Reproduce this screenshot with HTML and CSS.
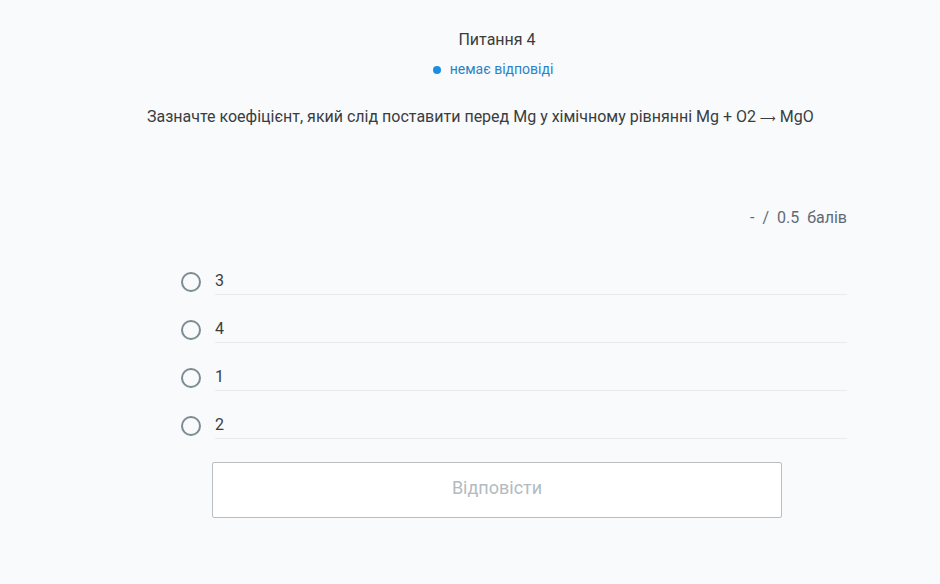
FILE: index.html
```html
<!DOCTYPE html>
<html lang="uk">
<head>
<meta charset="utf-8">
<title>Питання 4</title>
<link rel="stylesheet" href="styles.css">
</head>
<body>
<main class="quiz">
  <h1 class="q-title">Питання 4</h1>
  <div class="q-status"><span class="dot"></span><span>немає відповіді</span></div>
  <p class="q-text">Зазначте коефіцієнт, який слід поставити перед Mg у хімічному рівнянні Mg + O2 <span class="arrow">⟶</span> MgO</p>
  <div class="q-score">-&nbsp; /&nbsp; 0.5&nbsp; балів</div>
  <ul class="options">
    <li class="option"><span class="radio"></span><span class="label">3</span></li>
    <li class="option"><span class="radio"></span><span class="label">4</span></li>
    <li class="option"><span class="radio"></span><span class="label">1</span></li>
    <li class="option"><span class="radio"></span><span class="label">2</span></li>
  </ul>
  <div class="actions"><button class="submit" type="button">Відповісти</button></div>
</main>
</body>
</html>
```
FILE: styles.css
```css
html, body {
  margin: 0;
  padding: 0;
  background: #f9fafc;
  font-family: Roboto, "Noto Sans", sans-serif;
  color: #3a3d40;
}
.quiz {
  width: 700px;
  margin-left: 147px;
  padding-top: 28px;
  display: flex;
  flex-direction: column;
}
.q-title {
  margin: 0;
  font-size: 16px;
  font-weight: 400;
  line-height: 24px;
  text-align: center;
  color: #3a3d40;
}
.q-status {
  margin-top: 7px;
  height: 20px;
  display: flex;
  align-items: center;
  justify-content: center;
  gap: 9px;
  font-size: 14px;
  line-height: 20px;
  color: #2b83c6;
  padding-right: 8px;
}
.dot {
  width: 8px;
  height: 8px;
  border-radius: 50%;
  background: #1a8ee2;
  margin-top: 2px;
}
.q-text {
  margin: 26px 0 0;
  height: 24px;
  font-size: 16px;
  line-height: 24px;
}
.arrow {
  font-family: "DejaVu Sans", sans-serif;
  font-size: 11px;
  line-height: 1;
}
.q-score {
  margin-top: 77px;
  text-align: right;
  font-size: 16px;
  line-height: 24px;
  color: #5f6b74;
}
.options {
  list-style: none;
  margin: 17px 0 0;
  padding: 0 0 0 34px;
}
.option {
  display: flex;
  align-items: flex-end;
  height: 48px;
}
.radio {
  width: 16px;
  height: 16px;
  border: 2px solid #7d8b93;
  border-radius: 50%;
  margin-right: 14px;
  margin-bottom: 3px;
  flex: none;
}
.label {
  flex: 1;
  font-size: 16px;
  line-height: 24px;
  padding-bottom: 1px;
  border-bottom: 1px solid #e8ebee;
}
.actions {
  margin-top: 23px;
  padding-left: 65px;
}
.submit {
  width: 570px;
  height: 56px;
  padding: 0 0 5px;
  background: #ffffff;
  border: 1px solid #b9bec2;
  border-radius: 2px;
  font-family: Roboto, "Noto Sans", sans-serif;
  font-size: 18px;
  color: #b3bbc1;
  cursor: default;
}
```
